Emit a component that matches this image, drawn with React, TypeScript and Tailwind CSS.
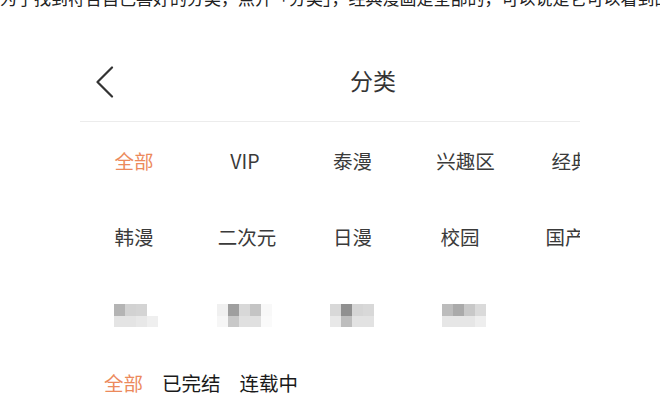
import React from 'react'

type Cell = { t: string; cls: string }

const rowOne: Cell[] = [
  { t: '全部', cls: 'text-[#ec8a5c]' },
  { t: 'VIP', cls: 'text-[#3a3a3a] pl-[2px]' },
  { t: '泰漫', cls: 'text-[#3a3a3a] pr-[3px]' },
  { t: '兴趣区', cls: 'text-[#3a3a3a] pl-[3px]' },
  { t: '经典', cls: 'text-[#3a3a3a] pr-[6px]' },
]

const rowTwo: Cell[] = [
  { t: '韩漫', cls: 'text-[#3a3a3a]' },
  { t: '二次元', cls: 'text-[#3a3a3a] pl-[6px]' },
  { t: '日漫', cls: 'text-[#3a3a3a] pr-[3px]' },
  { t: '校园', cls: 'text-[#3a3a3a] pr-[8px]' },
  { t: '国产', cls: 'text-[#3a3a3a] pr-[18px]' },
]

// pixelated (mosaic) labels in the third row
const mosaics: string[][][] = [
  [
    ['#b4b4b4', '#d2d2d2', '#d4d4d4', 'transparent'],
    ['#e4e4e4', '#e4e4e4', '#e8e8e8', '#efefef'],
  ],
  [
    ['#f0f0f0', '#9f9f9f', '#d8d8d8', '#c4c4c4', '#f8f8f8'],
    ['#f6f6f6', '#c8c8c8', '#e0e0e0', '#e0e0e0', '#fafafa'],
  ],
  [
    ['#d8d8d8', '#909090', '#d5d5d5', '#d8d8d8'],
    ['#e8e8e8', '#bdbdbd', '#e2e2e2', '#e2e2e2'],
  ],
  [
    ['#bcbcbc', '#aaaaaa', '#c8c8c8', '#dadada'],
    ['#e6e6e6', '#e6e6e6', '#e6e6e6', '#eeeeee'],
  ],
]

function Mosaic({ rows }: { rows: string[][] }) {
  return (
    <div className="flex flex-col">
      {rows.map((row, i) => (
        <div key={i} className="flex">
          {row.map((c, j) => (
            <div key={j} className="w-[11px] h-[11.5px]" style={{ backgroundColor: c }} />
          ))}
        </div>
      ))}
    </div>
  )
}

function Row({ cells, mt }: { cells: Cell[]; mt: string }) {
  return (
    <div className={`ml-[-1px] flex w-[560px] ${mt}`}>
      {cells.map((c) => (
        <div key={c.t} className={`w-[110px] shrink-0 text-center text-[19.5px] leading-[28px] ${c.cls}`}>
          {c.t}
        </div>
      ))}
    </div>
  )
}

export default function App() {
  return (
    <div
      className="w-[660px] h-[405px] bg-white overflow-hidden"
      style={{ fontFamily: '"Noto Sans CJK SC", "Noto Sans", sans-serif' }}
    >
      {/* cut-off line of article text at the very top */}
      <div className="h-[11px] overflow-hidden">
        <p className="mt-[-14px] whitespace-nowrap text-[17px] leading-[24px] text-[#222]">
          为了找到符合自己喜好的分类，点开「分类」，经典漫画是全部的，可以说是它可以看到的数据的
        </p>
      </div>

      <div className="ml-[80px] w-[500px] overflow-hidden">
        {/* header */}
        <div className="relative flex h-[111px] items-center justify-center border-b border-[#ececec]">
          <svg
            className="absolute left-[15px] top-[55px]"
            width="20"
            height="32"
            viewBox="0 0 20 32"
            fill="none"
          >
            <path d="M17 1.5 L2.5 16 L17 30.5" stroke="#333" strokeWidth="2.2" strokeLinecap="round" strokeLinejoin="round" />
          </svg>
          <span className="ml-[86px] mt-[29px] text-[23px] text-[#333]">分类</span>
        </div>

        {/* category grid */}
        <Row cells={rowOne} mt="mt-[25px]" />
        <Row cells={rowTwo} mt="mt-[48px]" />
        <div className="ml-[-1px] mt-[53px] flex w-[560px]">
          {mosaics.map((m, i) => (
            <div
              key={i}
              className={`flex w-[110px] shrink-0 justify-center ${i === 0 ? 'pl-[4px]' : ''} ${i === 2 ? 'pr-[5px]' : ''}`}
            >
              <Mosaic rows={m} />
            </div>
          ))}
        </div>
      </div>

      {/* status filter */}
      <div className="ml-[104px] mt-[42px] flex gap-[19px] text-[19.5px] leading-[28px]">
        <span className="text-[#ec8a5c]">全部</span>
        <span className="text-[#1a1a1a]">已完结</span>
        <span className="text-[#1a1a1a]">连载中</span>
      </div>
    </div>
  )
}
